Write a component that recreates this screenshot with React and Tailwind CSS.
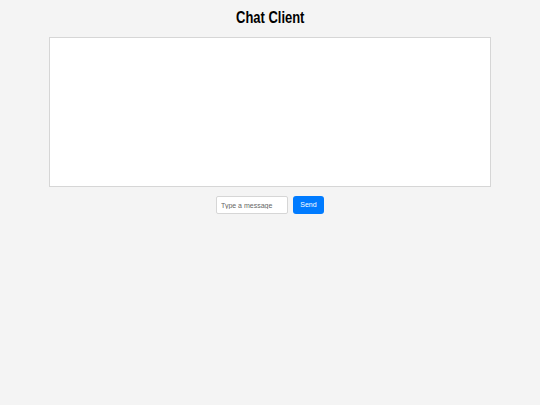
export default function App() {
  return (
    <div className="min-h-[405px] bg-[#f4f4f4] pt-[9px] font-['Liberation_Sans',Arial,sans-serif]">
      <div className="h-[18px] text-center leading-[18px]">
        <h1 className="inline-block scale-x-[0.81] align-top text-[16px] font-bold leading-[18px] text-black">
          Chat Client
        </h1>
      </div>
      <div className="mx-auto mt-[10px] h-[150px] w-[442px] border border-[#d6d6d6] bg-white"></div>
      <div className="mt-[9px] flex justify-center gap-[5px]">
        <input
          type="text"
          placeholder="Type a message"
          className="h-[18px] w-[72px] rounded-[2px] border border-[#d6d6d6] bg-white px-[4px] text-[7px] text-[#333] placeholder:text-[#666] outline-none"
        />
        <button className="h-[18px] w-[31px] rounded-[3px] bg-[#007bff] text-[7px] text-white">
          Send
        </button>
      </div>
    </div>
  );
}
